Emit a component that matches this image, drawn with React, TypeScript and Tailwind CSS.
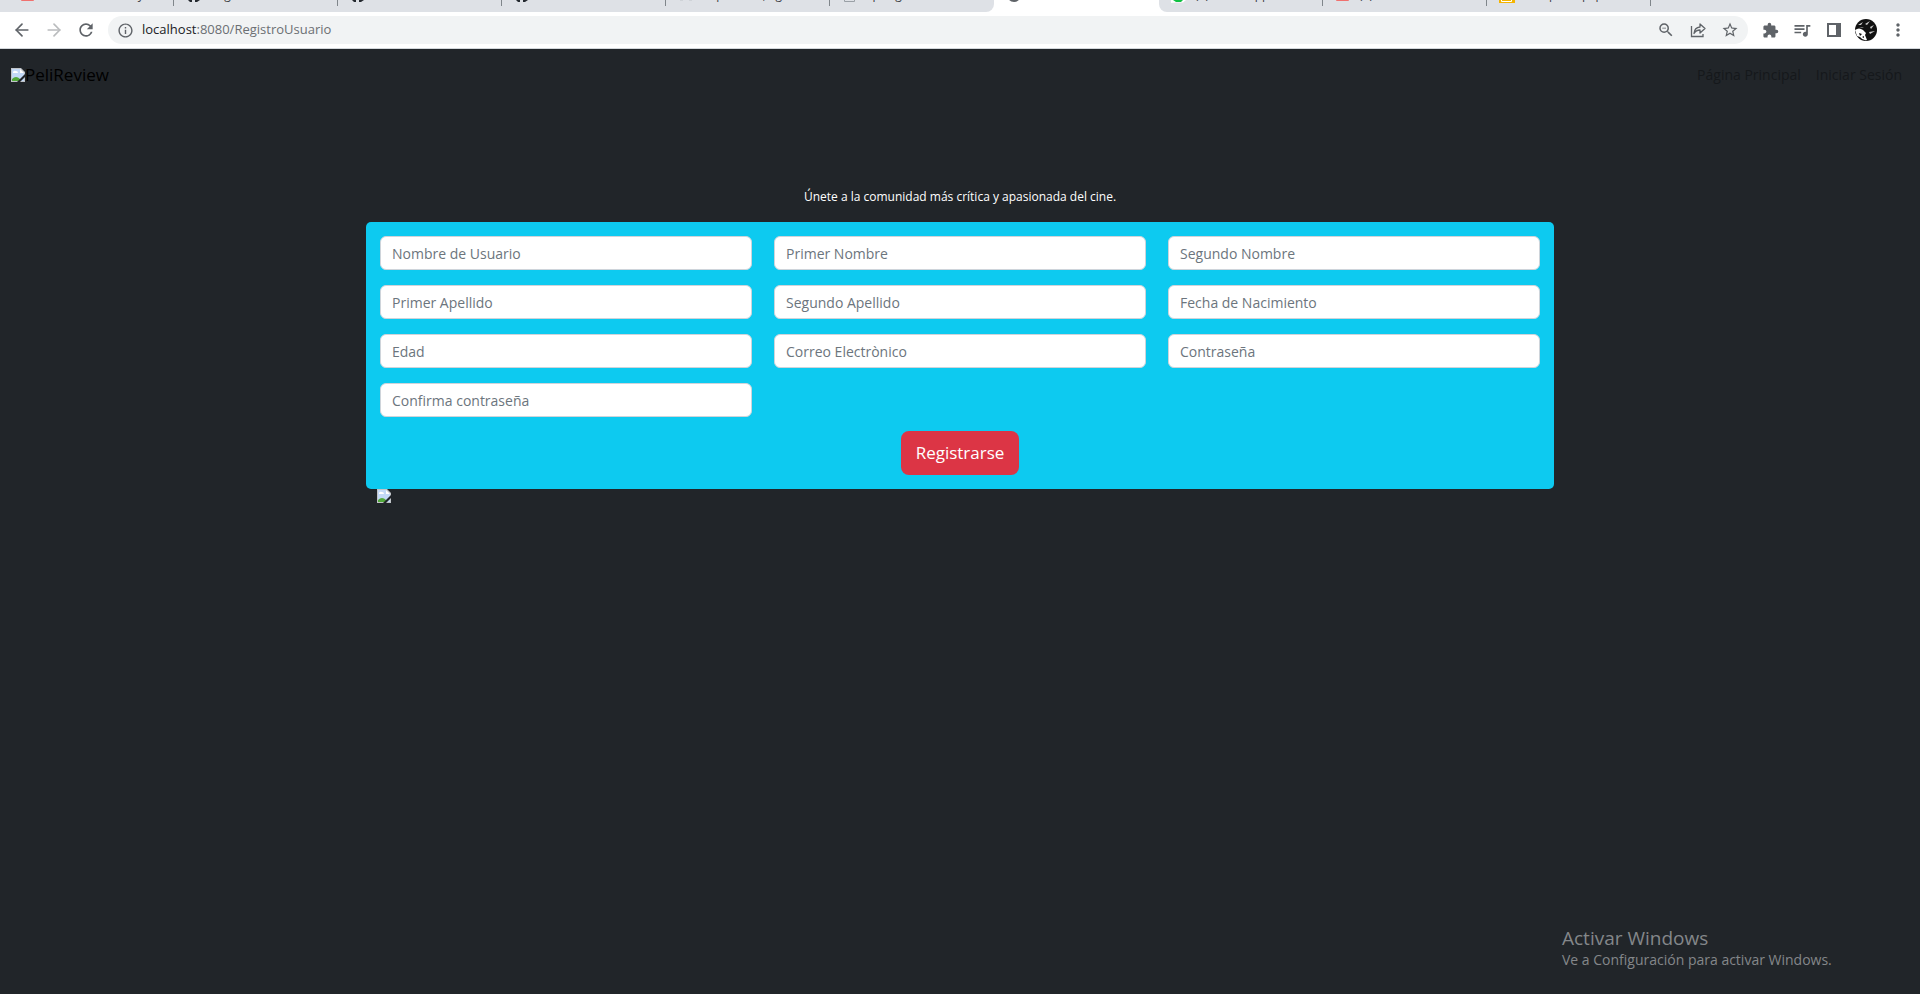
import { ArrowLeft, ArrowRight } from 'lucide-react';
import {
  MdRefresh,
  MdInfoOutline,
  MdZoomOut,
  MdStarBorder,
  MdExtension,
  MdQueueMusic,
  MdMoreVert,
} from 'react-icons/md';

const tabs = [
  { id: 1, kind: 'mail', title: 'Elementos de hoy', className: 'flex-[174] bg-[#dee1e6]' },
  { id: 2, kind: 'github', title: 'Registro', className: 'flex-[164] bg-[#dee1e6]' },
  { id: 3, kind: 'github', title: '', className: 'flex-[164] bg-[#dee1e6]' },
  { id: 4, kind: 'github', title: '', className: 'flex-[164] bg-[#dee1e6]' },
  { id: 5, kind: 'letters', title: 'Cap. series, ag', className: 'flex-[164] bg-[#dee1e6]' },
  { id: 6, kind: 'page', title: 'Spring', className: 'flex-[164] bg-[#dee1e6] rounded-br-lg', plain: true },
  { id: 7, kind: 'globe', title: '', className: 'flex-[165] bg-white', plain: true },
  { id: 8, kind: 'whatsapp', title: '(3) WhatsApp', className: 'flex-[164] bg-[#dee1e6] rounded-bl-lg' },
  { id: 9, kind: 'mail', title: '(3)', className: 'flex-[164] bg-[#dee1e6]' },
  { id: 10, kind: 'slides', title: 'Compra equipo', className: 'flex-[164] bg-[#dee1e6]' },
];

const fields = [
  { name: 'usuario', label: 'Nombre de Usuario' },
  { name: 'primerNombre', label: 'Primer Nombre' },
  { name: 'segundoNombre', label: 'Segundo Nombre' },
  { name: 'primerApellido', label: 'Primer Apellido' },
  { name: 'segundoApellido', label: 'Segundo Apellido' },
  { name: 'fecha', label: 'Fecha de Nacimiento' },
  { name: 'edad', label: 'Edad' },
  { name: 'correo', label: 'Correo Electrònico' },
  { name: 'contrasena', label: 'Contraseña', type: 'password' },
  { name: 'confirma', label: 'Confirma contraseña', type: 'password' },
];

const TabIcon = ({ kind }: { kind: string }) => (
  <svg className="w-4 h-3 shrink-0" viewBox="0 0 16 12" aria-hidden="true">
    {kind === 'mail' && <rect x="1" y="-6" width="13" height="7" rx="1" fill="#f0716f" />}
    {kind === 'github' && <path d="M2 0l2 2h2V0zM9 0v2h2l3-2z" fill="#24292f" />}
    {kind === 'letters' && <path d="M2 0h3v1H2zM11 0h3v1h-3z" fill="#cfd3d8" />}
    {kind === 'page' && <path d="M2.500 -6v7.500h10v-7.500" fill="none" stroke="#9aa0a6" />}
    {kind === 'globe' && <circle cx="8" cy="-5" r="7" fill="#5f6368" />}
    {kind === 'whatsapp' && (
      <>
        <path d="M0 3V0h15l-3 2.500H5z" fill="#fff" />
        <path d="M2 0h10l-2 2H5z" fill="#10c143" />
      </>
    )}
    {kind === 'slides' && (
      <>
        <path d="M0 0h16v3H0z" fill="#f4b400" />
        <path d="M2.500 0v1.500h10V0" fill="none" stroke="#fff" />
      </>
    )}
  </svg>
);

const BrokenImage = () => (
  <svg className="w-[14px] h-[14px] shrink-0" viewBox="0 0 14 14" aria-hidden="true">
    <path d="M0 0h10l4 4v10H0z" fill="#c0c4c8" />
    <path d="M1 1h8v4h4v8H1z" fill="#c3d9f7" />
    <path d="M9 1v4h4z" fill="#fff" />
    <path d="M2 4q1-2 3-1q2 0 2 2H2z" fill="#fff" />
    <path d="M1 13v-2q4-4 8 0l1 2z" fill="#52a83b" />
    <path d="M14 6v3l-5 5H6z" fill="#212529" />
  </svg>
);

const ShareIcon = () => (
  <svg className="w-4 h-4" viewBox="0 0 16 16" fill="none" stroke="currentColor" strokeWidth="1.300" aria-hidden="true">
    <path d="M1.500 4v10.500h11.500V12" />
    <path d="M4 11.500q.5-6 6-6.500V2l5 4.500-5 4.500V8q-4 0-6 3.500z" strokeLinejoin="round" />
  </svg>
);

const Avatar = () => (
  <svg className="w-[22px] h-[22px]" viewBox="0 0 22 22" aria-hidden="true">
    <circle cx="11" cy="11" r="11" fill="#111" />
    <path d="M0 11q4-3 8 0l3 3-1 2 2 5q-4 1-7-3l-3-1z" fill="#fff" />
    <path d="M3 6l5-3-2 3zM10 5l5-3-3 4zM15 8l4-2-3 4zM14 13l6-1-5 3zM4 9l5-1-2 1z" fill="#ccc" />
    <path d="M4 14l3 1-2 2zM7 18l2-1v2z" fill="#111" />
  </svg>
);

const iconButton = 'grid place-items-center w-8 h-7';

const BrowserBar = () => (
  <header className="bg-white border-b border-[#d3d7db] text-[#5f6368]">
    <div className="flex h-3 overflow-hidden bg-white">
      {tabs.map((tab) => (
        <div key={tab.id} className={`flex min-w-0 overflow-hidden ${tab.className}`}>
          <div className={tab.id === 1 ? 'flex flex-1 min-w-0 gap-2 pl-5' : 'flex flex-1 min-w-0 gap-2 pl-3'}>
            <TabIcon kind={tab.kind} />
            <span className="-mt-[13px] text-xs leading-4 whitespace-nowrap text-[#3c4043]">{tab.title}</span>
          </div>
          {!tab.plain && <span className="w-px h-[6px] bg-[#80868b]" />}
        </div>
      ))}
      <div className="flex-[269] bg-[#dee1e6]" />
    </div>
    <div className="flex items-center h-9 pr-[6px] pl-[10px]">
      <div className="flex items-center gap-2 pr-[10px]">
        <button aria-label="Atrás" className="grid place-items-center w-6 h-6">
          <ArrowLeft size={20} strokeWidth={2} />
        </button>
        <button aria-label="Adelante" className="grid place-items-center w-6 h-6 text-[#babcbe]">
          <ArrowRight size={20} strokeWidth={2} />
        </button>
        <button aria-label="Recargar" className="grid place-items-center w-6 h-6">
          <MdRefresh size={20} />
        </button>
      </div>
      <div className="flex flex-1 items-center h-7 pr-[2px] pl-[9px] rounded-full bg-[#f1f3f4]">
        <MdInfoOutline size={17} className="mr-2" />
        <p className="flex-1 text-[13px] text-[#6b6f73]">
          <span className="text-[#202124]">localhost</span>:8080/RegistroUsuario
        </p>
        <div className="flex items-center">
          <button aria-label="Zoom" className={iconButton}><MdZoomOut size={18} /></button>
          <button aria-label="Compartir" className={iconButton}><ShareIcon /></button>
          <button aria-label="Favorito" className={iconButton}><MdStarBorder size={18} /></button>
        </div>
      </div>
      <div className="flex items-center pl-[6px]">
        <button aria-label="Extensiones" className={iconButton}><MdExtension size={17} /></button>
        <button aria-label="Multimedia" className={iconButton}><MdQueueMusic size={20} /></button>
        <button aria-label="Panel lateral" className={iconButton}>
          <svg className="w-4 h-4" viewBox="0 0 16 16" aria-hidden="true">
            <path d="M1 1h14v14H1zM3 3v10h7V3z" fill="currentColor" fillRule="evenodd" />
          </svg>
        </button>
        <button aria-label="Perfil" className={iconButton}><Avatar /></button>
        <button aria-label="Menú" className={iconButton}><MdMoreVert size={20} /></button>
      </div>
    </div>
  </header>
);

const App = () => {
  return (
    <div className="flex flex-col min-h-screen bg-[#212529] font-['Open_Sans','Noto_Sans',sans-serif]">
      <BrowserBar />

      <nav className="flex items-center justify-between px-[11px] pt-3">
        <a href="#" className="flex items-center text-[17px] leading-7 text-black">
          <BrokenImage />
          PeliReview
        </a>
        <div className="flex gap-[15px] pr-[7px] text-sm text-[#15181b]">
          <a href="#">Página Principal</a>
          <a href="#">Iniciar Sesión</a>
        </div>
      </nav>

      <main className="flex-1 w-full max-w-[1188px] mx-auto pt-[98px]">
        <p className="mb-[15px] text-center text-xs leading-5 text-white">
          Únete a la comunidad más crítica y apasionada del cine.
        </p>
        <form className="p-[14px] rounded-[5px] bg-[#0dcaf0]">
          <div className="grid grid-cols-3 gap-x-[22px] gap-y-[15px]">
            {fields.map((field) => (
              <input
                key={field.name}
                name={field.name}
                type={field.type || 'text'}
                aria-label={field.label}
                placeholder={field.label}
                className="w-full h-[34px] px-[11px] text-sm bg-white border border-[#ced4da] rounded-md placeholder:text-[#6c757d]"
              />
            ))}
          </div>
          <div className="flex justify-center pt-[14px]">
            <button type="submit" className="h-11 px-[15px] text-[17px] text-white rounded-lg bg-[#dc3545]">
              Registrarse
            </button>
          </div>
        </form>
        <div className="px-[11px]">
          <BrokenImage />
        </div>
      </main>

      <footer className="self-end w-[358px] pb-6 text-[#84878a]">
        <p className="text-[19px] leading-6">Activar Windows</p>
        <p className="text-sm leading-5">Ve a Configuración para activar Windows.</p>
      </footer>
    </div>
  );
};

export default App;
